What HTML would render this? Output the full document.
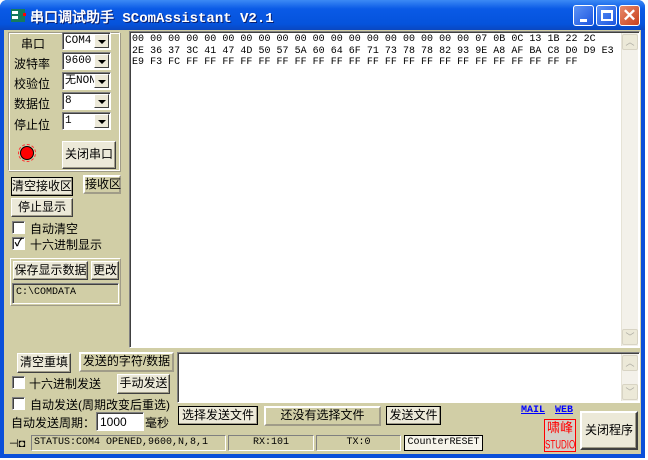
<!DOCTYPE html><html><head><meta charset="utf-8"><style>
*{box-sizing:border-box;margin:0;padding:0;white-space:nowrap}
body{width:648px;height:460px;overflow:hidden;background:#fff;font-family:"Liberation Sans","WenQuanYi Zen Hei","Noto Sans CJK SC",sans-serif;font-size:12px;position:relative}
.a{position:absolute}
.win{left:0;top:0;width:645px;height:458px;background:#0a4fd9;border-radius:7px 7px 0 0}
.title{left:0;top:0;width:645px;height:30px;border-radius:7px 7px 0 0;background:linear-gradient(#3c8af5,#0a5ae6 30%,#0553dc 80%,#0a47c0)}
.tt{left:30px;top:7px;color:#fff;font-weight:bold;font-size:14px;font-family:"Liberation Mono","WenQuanYi Zen Hei",monospace;text-shadow:1px 1px #0a1f70}
.body{left:4px;top:30px;width:637px;height:424px;background:#d1cea6}
.tb{width:21px;height:21px;top:5px;border:1px solid #fff;border-radius:3px;background:linear-gradient(135deg,#5d93f5,#1c55e0)}
.btn{background:#ece9d8;border:1px solid;border-color:#fff #404040 #404040 #fff;box-shadow:inset -1px -1px #a09c88;text-align:center;line-height:17px;font-size:12px}
.sunk{border:1px solid;border-color:#808080 #fff #fff #808080;box-shadow:inset 1px 1px #404040}
.lbl{border:2px solid;border-color:#fff #a09c88 #a09c88 #fff;text-align:center;line-height:15px;font-size:12px}
.combo{background:#fff;border:1px solid;border-color:#808080 #fff #fff #808080;box-shadow:inset 1px 1px #404040;width:49px;height:18px;font-family:"Liberation Mono","WenQuanYi Zen Hei",monospace;font-size:11px;line-height:16px;padding-left:2px;overflow:hidden}
.combo i{position:absolute;right:1px;top:1px;width:15px;height:14px;background:#ece9d8;border:1px solid;border-color:#fff #404040 #404040 #fff}
.combo i:after{content:"";position:absolute;left:3px;top:5px;border:4px solid transparent;border-top:4px solid #000;border-bottom:0}
.cb{width:13px;height:13px;background:#fff;border:1px solid;border-color:#808080 #fff #fff #808080;box-shadow:inset 1px 1px #404040}
.mono{font-family:"Liberation Mono",monospace}
.sb{background:#f3f1ea;border-left:1px solid #e6e3d6}
.sbb{width:16px;height:16px;background:#ece9d8;border:1px solid #d8d4c4;border-radius:2px;color:#aaa8a0;font-size:9px;text-align:center;line-height:14px}
.t{font-size:12px}
</style></head><body>
<div class="a win"></div>
<div class="a title"></div>
<div class="a" style="left:11px;top:9px;width:14px;height:13px;background:#167a5c"></div>
<div class="a" style="left:12px;top:11px;width:6px;height:3px;background:#fff"></div>
<div class="a" style="left:12px;top:16px;width:6px;height:3px;background:#fff"></div>
<div class="a" style="left:23px;top:13px;width:3px;height:3px;background:#f00"></div>
<div class="a tt">串口调试助手 SComAssistant V2.1</div>
<div class="a tb" style="left:573px"><div class="a" style="left:6px;top:13px;width:7px;height:3px;background:#fff"></div></div>
<div class="a tb" style="left:596px"><div class="a" style="left:4px;top:4px;width:12px;height:11px;border:2px solid #fff;border-top-width:3px"></div></div>
<div class="a tb" style="left:619px;background:linear-gradient(135deg,#e88a6a,#c8401c);color:#fff;font-size:17px;text-align:center;line-height:19px;font-weight:bold">✕</div>
<div class="a body"></div>
<div class="a" style="left:8px;top:32px;width:112px;height:139px;border:1px solid;border-color:#a09c88 #fff #fff #a09c88;box-shadow:inset 1px 1px #fff,1px 1px #a09c88"></div>
<div class="a t" style="left:21px;top:35px">串口</div>
<div class="a t" style="left:14px;top:55px">波特率</div>
<div class="a t" style="left:14px;top:75px">校验位</div>
<div class="a t" style="left:14px;top:95px">数据位</div>
<div class="a t" style="left:14px;top:116px">停止位</div>
<div class="a combo" style="left:62px;top:32px">COM4<i></i></div>
<div class="a combo" style="left:62px;top:52px">9600<i></i></div>
<div class="a combo" style="left:62px;top:72px">无NON<i></i></div>
<div class="a combo" style="left:62px;top:92px">8<i></i></div>
<div class="a combo" style="left:62px;top:112px">1<i></i></div>
<div class="a" style="left:20px;top:146px;width:14px;height:14px;border-radius:50%;background:#f00;border:1px solid #000"></div>
<div class="a" style="left:18px;top:144px;width:18px;height:18px;border-radius:50%;border:1px dashed #f33"></div>
<div class="a btn" style="left:62px;top:141px;width:54px;height:28px;line-height:25px">关闭串口</div>
<div class="a btn" style="left:11px;top:177px;width:62px;height:19px;border:1px solid #000">清空接收区</div>
<div class="a lbl" style="left:83px;top:175px;width:38px;height:19px">接收区</div>
<div class="a btn" style="left:11px;top:198px;width:62px;height:19px">停止显示</div>
<div class="a cb" style="left:12px;top:221px"></div><div class="a t" style="left:30px;top:220px">自动清空</div>
<div class="a cb" style="left:12px;top:237px;font-size:11px;line-height:11px;text-align:center;font-weight:bold">✓</div><div class="a t" style="left:30px;top:236px">十六进制显示</div>
<div class="a" style="left:10px;top:258px;width:111px;height:48px;border:1px solid;border-color:#fff #a09c88 #a09c88 #fff"></div>
<div class="a btn" style="left:13px;top:261px;width:75px;height:19px">保存显示数据</div>
<div class="a btn" style="left:91px;top:261px;width:28px;height:19px">更改</div>
<div class="a sunk mono" style="left:12px;top:283px;width:107px;height:21px;padding:3px 3px;font-size:10px">C:\COMDATA</div>
<div class="a sunk" style="left:129px;top:31px;width:511px;height:317px;background:#fff"></div>
<div class="a mono" style="left:132px;top:34px;font-size:10px;line-height:11.5px;white-space:pre;letter-spacing:0.02px">00 00 00 00 00 00 00 00 00 00 00 00 00 00 00 00 00 00 00 07 0B 0C 13 1B 22 2C
2E 36 37 3C 41 47 4D 50 57 5A 60 64 6F 71 73 78 78 82 93 9E A8 AF BA C8 D0 D9 E3
E9 F3 FC FF FF FF FF FF FF FF FF FF FF FF FF FF FF FF FF FF FF FF FF FF FF</div>
<div class="a sb" style="left:621px;top:33px;width:17px;height:313px"></div>
<div class="a sbb" style="left:622px;top:34px">︿</div>
<div class="a sbb" style="left:622px;top:329px">﹀</div>
<div class="a btn" style="left:17px;top:353px;width:54px;height:20px">清空重填</div>
<div class="a lbl" style="left:79px;top:352px;width:95px;height:20px">发送的字符/数据</div>
<div class="a sunk" style="left:177px;top:352px;width:463px;height:51px;background:#fff"></div>
<div class="a sb" style="left:621px;top:354px;width:17px;height:47px"></div>
<div class="a sbb" style="left:622px;top:355px">︿</div>
<div class="a sbb" style="left:622px;top:384px">﹀</div>
<div class="a cb" style="left:12px;top:376px"></div><div class="a t" style="left:29px;top:375px">十六进制发送</div>
<div class="a btn" style="left:117px;top:374px;width:53px;height:20px">手动发送</div>
<div class="a cb" style="left:12px;top:397px"></div><div class="a t" style="left:30px;top:396px">自动发送(周期改变后重选)</div>
<div class="a t" style="left:11px;top:414px">自动发送周期：</div>
<div class="a sunk" style="left:96px;top:412px;width:48px;height:19px;background:#fff;padding:2px 3px;font-size:12px">1000</div>
<div class="a t" style="left:145px;top:414px">毫秒</div>
<div class="a btn" style="left:178px;top:406px;width:80px;height:19px;border:1px solid #000">选择发送文件</div>
<div class="a lbl" style="left:264px;top:406px;width:117px;height:20px">还没有选择文件</div>
<div class="a btn" style="left:386px;top:406px;width:55px;height:19px;border:1px solid #000">发送文件</div>
<div class="a mono" style="left:521px;top:405px;font-size:10px;color:#00f;text-decoration:underline;font-weight:bold">MAIL</div>
<div class="a mono" style="left:555px;top:405px;font-size:10px;color:#00f;text-decoration:underline;font-weight:bold">WEB</div>
<div class="a" style="left:544px;top:419px;width:32px;height:33px;border:1px solid #f00;background:#d4d0c8;color:#f00;text-align:center;font-size:13px;line-height:15px;overflow:hidden">啸峰<br><span style="font-size:8px;display:inline-block;transform:scaleY(1.5)">STUDIO</span></div>
<div class="a btn" style="left:580px;top:411px;width:58px;height:39px;line-height:35px;border:2px solid;border-color:#fff #404040 #404040 #fff">关闭程序</div>
<div class="a" style="left:9px;top:437px;font-size:11px">⊣◘</div>
<div class="a sunk mono" style="left:31px;top:435px;width:195px;height:16px;box-shadow:none;font-size:10px;padding-left:2px;line-height:14px">STATUS:COM4 OPENED,9600,N,8,1</div>
<div class="a sunk mono" style="left:228px;top:435px;width:86px;height:16px;box-shadow:none;font-size:10px;text-align:center;line-height:14px">RX:101</div>
<div class="a sunk mono" style="left:316px;top:435px;width:85px;height:16px;box-shadow:none;font-size:10px;text-align:center;line-height:14px">TX:0</div>
<div class="a mono" style="left:404px;top:435px;width:79px;height:16px;border:1px solid #000;background:#f6f4ea;font-size:10px;text-align:center;line-height:14px">CounterRESET</div>
</body></html>
